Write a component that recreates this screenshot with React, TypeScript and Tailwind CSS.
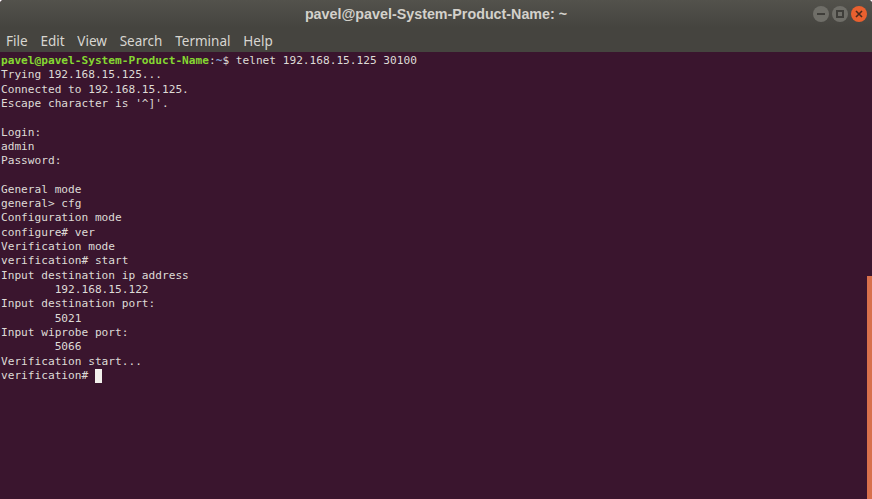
const lines = [
  'Trying 192.168.15.125...',
  'Connected to 192.168.15.125.',
  "Escape character is '^]'.",
  '',
  'Login:',
  'admin',
  'Password:',
  '',
  'General mode',
  'general> cfg',
  'Configuration mode',
  'configure# ver',
  'Verification mode',
  'verification# start',
  'Input destination ip address',
  '        192.168.15.122',
  'Input destination port:',
  '        5021',
  'Input wiprobe port:',
  '        5066',
  'Verification start...',
]

function WindowButton({ className, children }: { className: string; children: React.ReactNode }) {
  return (
    <div className={`flex h-[16px] w-[16px] items-center justify-center rounded-full ${className}`}>
      {children}
    </div>
  )
}

export default function App() {
  return (
    <div className="h-[499px] w-[872px] bg-white">
      <div className="flex h-full flex-col overflow-hidden rounded-t-[4px] bg-[#3a152e] font-['Noto_Sans',sans-serif]">
        {/* title bar */}
        <div className="relative flex h-[28px] shrink-0 items-center justify-center bg-gradient-to-b from-[#53524c] to-[#45443f] pt-[1px]">
          <span className="font-['Liberation_Sans',sans-serif] text-[14.3px] font-bold text-[#d3d1cb]">pavel@pavel-System-Product-Name: ~</span>
          <div className="absolute right-[5px] top-[6px] flex gap-[3px]">
            <WindowButton className="bg-[#6f6e68]">
              <div className="h-[2px] w-[8px] bg-[#3f3e3a]" />
            </WindowButton>
            <WindowButton className="bg-[#6f6e68]">
              <div className="h-[8px] w-[8px] border-2 border-[#3f3e3a]" />
            </WindowButton>
            <WindowButton className="bg-[#e9602f]">
              <svg width="8" height="8" viewBox="0 0 8 8">
                <path d="M1 1l6 6M7 1l-6 6" stroke="#4a2a1c" strokeWidth="1.6" />
              </svg>
            </WindowButton>
          </div>
        </div>

        {/* menu bar */}
        <div className="flex h-[24px] shrink-0 items-center gap-[12.8px] bg-[#45443f] pl-[6px] pt-[2px] text-[13.5px] text-[#d8d6d1]">
          <span>File</span>
          <span>Edit</span>
          <span>View</span>
          <span>Search</span>
          <span>Terminal</span>
          <span>Help</span>
        </div>

        {/* terminal */}
        <div className="relative flex-1 pl-[1px] pt-[2px] font-['DejaVu_Sans_Mono',monospace] text-[11.15px] leading-[14.32px] text-[#dedbd6]">
          <div className="h-[14.32px] whitespace-pre">
            <span className="font-bold text-[#85d732]">pavel@pavel-System-Product-Name</span>
            <span>:</span>
            <span className="font-bold text-[#7f9fcf]">~</span>
            <span>$ telnet 192.168.15.125 30100</span>
          </div>
          {lines.map((line, i) => (
            <div key={i} className="h-[14.32px] whitespace-pre">
              {line}
            </div>
          ))}
          <div className="flex h-[14.32px] whitespace-pre">
            <span>verification# </span>
            <div className="h-[14px] w-[7px] bg-[#f2f0ec]" />
          </div>
          <div className="absolute bottom-0 right-0 h-[223px] w-[5px] bg-[#d8704c]" />
        </div>
      </div>
    </div>
  )
}
